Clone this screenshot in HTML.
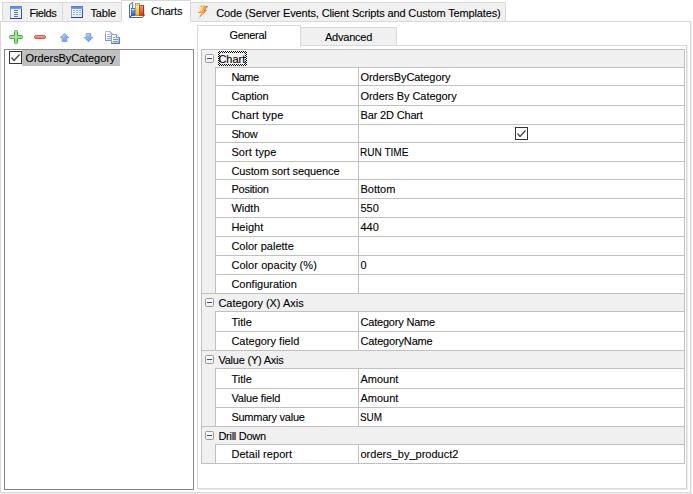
<!DOCTYPE html>
<html><head><meta charset="utf-8">
<style>
*{box-sizing:border-box;margin:0;padding:0}
html,body{width:693px;height:494px;overflow:hidden;background:#fff}
body{font-family:"Liberation Sans",sans-serif;font-size:11px;line-height:13px;color:#000;position:relative;-webkit-text-stroke:0.1px #000}
.abs{position:absolute}
.tab{position:absolute;background:#f0f0f0;border:1px solid #d9d9d9;border-bottom:none;white-space:nowrap}
.tab.sel{background:#fff}
.tab span{position:absolute;white-space:nowrap}
.page{position:absolute;left:0px;top:21px;width:691px;height:472px;border:1px solid #d9d9d9;background:#fff;box-shadow:1px 1px 0 #ececec}
.list{position:absolute;left:4px;top:49px;width:190px;height:441px;border:1px solid #868686;background:#fff}
.ipage{position:absolute;left:197px;top:45px;width:490px;height:444px;border:1px solid #d9d9d9;background:#fff;box-shadow:1px 1px 0 #ececec}
.grid{position:absolute;left:201px;top:49px;width:484px;height:415px;background:#fff;border:1px solid #c0c0c0}
.row{position:absolute;left:0;width:482px}
.ln{position:absolute;left:13px;right:0;bottom:0;height:1px;background:#c0c0c0}
.ln.f{left:0}
.hdr{background:#f0f0f0}
.gut{position:absolute;left:0;top:0;bottom:0;width:14px;background:#f0f0f0;border-right:1px solid #c0c0c0}
.lab{position:absolute;left:29.4px;white-space:nowrap}
.val{position:absolute;left:156px;top:0;bottom:0;width:326px;border-left:1px solid #c0c0c0;white-space:nowrap}
.val span{position:absolute;left:1.5px}
.ht{position:absolute;left:16px;height:15px;padding:2px 2px 0 0.4px;white-space:nowrap}
.focr{position:absolute;left:16px;width:29px;height:15px;border:2px solid transparent;background:linear-gradient(#f0f0f0,#f0f0f0) padding-box,repeating-conic-gradient(#000 0% 25%,#fff 0% 50%) 0 0/2px 2px border-box}
.pm{position:absolute;left:3px;width:9px;height:9px;border:1px solid #999;border-radius:1.5px;background:linear-gradient(#fff,#eee)}
.pm:after{content:"";position:absolute;left:1px;top:3px;width:5px;height:1px;background:#3a4a8a}
.cb{position:absolute;left:156px;width:13px;height:13px;border:1px solid #333;background:#fff}
.cb svg{position:absolute;left:-1px;top:-1px}
</style></head><body>
<!-- top tabs -->
<div class="tab" style="left:2px;top:2px;width:61px;height:20px"><span style="left:26.5px;top:4px;letter-spacing:-0.4px">Fields</span></div>
<div class="tab" style="left:62px;top:2px;width:62px;height:20px"><span style="left:27.4px;top:4px;letter-spacing:-0.15px">Table</span></div>
<div class="tab" style="left:189px;top:2px;width:317px;height:20px"><span style="left:26.3px;top:4px;letter-spacing:-0.135px">Code (Server Events, Client Scripts and Custom Templates)</span></div>
<div class="page"></div>
<div class="tab sel" style="left:121px;top:0px;width:70px;height:22px"><span style="left:29px;top:4px;letter-spacing:-0.2px">Charts</span></div>


<!-- Fields icon -->
<svg class="abs" style="left:10px;top:6px" width="12" height="13" viewBox="0 0 12 13">
<defs><linearGradient id="gF" x1="0" y1="0" x2="1" y2="1"><stop offset="0" stop-color="#fff"/><stop offset="1" stop-color="#d8e2f8"/></linearGradient>
<linearGradient id="gB" x1="0" y1="0" x2="0" y2="1"><stop offset="0" stop-color="#4a7ae8"/><stop offset="1" stop-color="#7a9ff0"/></linearGradient></defs>
<rect x="0.5" y="0.5" width="11" height="12" fill="url(#gF)" stroke="#86a2dc"/>
<rect x="0" y="0" width="12" height="3" fill="url(#gB)"/>
<rect x="11" y="3" width="1" height="10" fill="#3d5a8a"/><rect x="0" y="12" width="12" height="1" fill="#2f4a78"/>
<rect x="4" y="4" width="4" height="1" fill="#777"/><rect x="4" y="6" width="4" height="1" fill="#777"/><rect x="4" y="8" width="4" height="1" fill="#777"/><rect x="4" y="10" width="4" height="1" fill="#777"/>
</svg>
<!-- Table icon -->
<svg class="abs" style="left:71px;top:6px" width="12" height="12" viewBox="0 0 12 12">
<rect x="0.5" y="0.5" width="11" height="11" fill="url(#gF)" stroke="#86a2dc"/>
<rect x="0" y="0" width="12" height="3" fill="url(#gB)"/>
<rect x="11" y="3" width="1" height="9" fill="#3d5a8a"/><rect x="0" y="11" width="12" height="1" fill="#2f4a78"/>
<g fill="#9fb0d4"><rect x="2" y="4" width="2" height="1"/><rect x="5" y="4" width="2" height="1"/><rect x="8" y="4" width="2" height="1"/>
<rect x="2" y="6" width="2" height="1"/><rect x="5" y="6" width="2" height="1"/><rect x="8" y="6" width="2" height="1"/>
<rect x="2" y="8" width="2" height="1"/><rect x="5" y="8" width="2" height="1"/><rect x="8" y="8" width="2" height="1"/></g>
</svg>
<!-- Charts icon -->
<svg class="abs" style="left:129px;top:2px" width="16" height="16" viewBox="0 0 16 16">
<defs><linearGradient id="cB" x1="0" y1="0" x2="0" y2="1"><stop offset="0" stop-color="#7fb0ff"/><stop offset="1" stop-color="#2a58d0"/></linearGradient>
<linearGradient id="cY" x1="0" y1="0" x2="0" y2="1"><stop offset="0" stop-color="#fff8b0"/><stop offset="1" stop-color="#f2b800"/></linearGradient>
<linearGradient id="cR" x1="0" y1="0" x2="0" y2="1"><stop offset="0" stop-color="#ff9a80"/><stop offset="1" stop-color="#d83a10"/></linearGradient></defs>
<path d="M0.5 2.5 L3.7 0.4 L3.7 12 L0.5 15.2 Z" fill="#eef3fc" stroke="#3c5f95" stroke-width="0.9"/>
<path d="M0.5 15.5 L13.5 15.5 L15.6 12.8 L3.7 12.8 Z" fill="#f8faff" stroke="#2c4f88" stroke-width="0.9"/>
<rect x="2.3" y="6.6" width="3.6" height="7" fill="url(#cB)" stroke="#2848b0" stroke-width="0.6"/>
<rect x="2.6" y="7.2" width="3" height="0.9" fill="#dfeaff"/>
<rect x="6.3" y="1.3" width="4.2" height="12.3" fill="url(#cY)" stroke="#9a8630" stroke-width="0.7"/>
<rect x="6.6" y="2.6" width="3.6" height="0.7" fill="#9a8630" opacity="0.6"/>
<rect x="10.7" y="3.4" width="4.1" height="10.2" fill="url(#cR)" stroke="#a03a18" stroke-width="0.7"/>
<rect x="13.9" y="3.4" width="1" height="10.2" fill="#8a2c10" opacity="0.7"/>
</svg>
<!-- Lightning icon -->
<svg class="abs" style="left:197px;top:5px" width="12" height="14" viewBox="0 0 12 14">
<defs><linearGradient id="lG" x1="0" y1="0" x2="1" y2="0.25"><stop offset="0" stop-color="#ffe45a"/><stop offset="0.45" stop-color="#ffb845"/><stop offset="0.8" stop-color="#ff7a78"/><stop offset="1" stop-color="#f05070"/></linearGradient></defs>
<path d="M3 1 L10.9 1 L7.2 5.6 L9.4 5.6 L1.8 12.9 L4.3 7.9 L1 7.9 Z" fill="url(#lG)"/>
<path d="M3.6 1.9 L2.3 6.6" stroke="#fffbe0" stroke-width="1" opacity="0.85" fill="none"/>
<path d="M5.6 1.8 L4.6 5.2" stroke="#fff6c8" stroke-width="0.8" opacity="0.7" fill="none"/>
<path d="M10.9 1 L7.2 5.6 L9.4 5.6 L1.8 12.9" fill="none" stroke="#3a2430" stroke-width="0.8" stroke-dasharray="1 1" opacity="0.75"/>
<path d="M1 7.6 L4 7.6" stroke="#8a7a20" stroke-width="0.8" opacity="0.7"/>
<path d="M3.2 0.9 L10 0.9" stroke="#b8c850" stroke-width="0.7" opacity="0.8"/>
</svg>
<!-- Plus -->
<svg class="abs" style="left:9px;top:30px" width="14" height="14" viewBox="0 0 14 14">
<defs><linearGradient id="pG" x1="0" y1="0" x2="1" y2="1"><stop offset="0" stop-color="#c4f4b4"/><stop offset="1" stop-color="#7fd870"/></linearGradient></defs>
<path d="M6.5 0.5 H7.5 Q8.5 0.5 8.5 1.5 V5.5 H12.5 Q13.5 5.5 13.5 6.5 V7.5 Q13.5 8.5 12.5 8.5 H8.5 V12.5 Q8.5 13.5 7.5 13.5 H6.5 Q5.5 13.5 5.5 12.5 V8.5 H1.5 Q0.5 8.5 0.5 7.5 V6.5 Q0.5 5.5 1.5 5.5 H5.5 V1.5 Q5.5 0.5 6.5 0.5 Z" fill="url(#pG)" stroke="#45a545" stroke-width="1"/>
</svg>
<!-- Minus -->
<svg class="abs" style="left:34px;top:35px" width="12" height="4" viewBox="0 0 12 4">
<defs><linearGradient id="mG" x1="0" y1="0" x2="0" y2="1"><stop offset="0" stop-color="#fbb8a4"/><stop offset="0.5" stop-color="#f49078"/><stop offset="1" stop-color="#e8684e"/></linearGradient></defs>
<rect x="0.5" y="0.5" width="11" height="3" rx="1.5" fill="url(#mG)" stroke="#d9584a"/>
</svg>
<!-- Up arrow -->
<svg class="abs" style="left:60px;top:33px" width="9" height="9" viewBox="0 0 9 9">
<defs><linearGradient id="aG" x1="0.2" y1="0" x2="0.8" y2="1"><stop offset="0" stop-color="#c4d8fa"/><stop offset="0.5" stop-color="#8fb2f2"/><stop offset="1" stop-color="#6a96e8"/></linearGradient></defs>
<path d="M4.5 0.3 L8.8 4.6 L6.8 4.6 L6.8 8.8 L2.2 8.8 L2.2 4.6 L0.2 4.6 Z" fill="url(#aG)" stroke="#5f8ce0" stroke-width="0.7"/>
</svg>
<!-- Down arrow -->
<svg class="abs" style="left:84px;top:33px" width="9" height="9" viewBox="0 0 9 9">
<path d="M4.5 8.7 L8.8 4.4 L6.8 4.4 L6.8 0.2 L2.2 0.2 L2.2 4.4 L0.2 4.4 Z" fill="url(#aG)" stroke="#5f8ce0" stroke-width="0.7"/>
</svg>
<!-- Copy -->
<svg class="abs" style="left:105px;top:31px" width="15" height="13" viewBox="0 0 15 13">
<defs><linearGradient id="cpG" x1="0" y1="0" x2="1" y2="1"><stop offset="0.3" stop-color="#fff"/><stop offset="1" stop-color="#d4def4"/></linearGradient></defs>
<path d="M0.5 0.5 H5.2 L7.5 2.8 V9.5 H0.5 Z" fill="url(#cpG)" stroke="#a9bbe2" stroke-width="1"/>
<path d="M0.5 3 V9.5 H6.5" fill="none" stroke="#8595b4" stroke-width="1"/>
<path d="M5.2 0.5 V2.8 H7.5" fill="none" stroke="#7f93b8" stroke-width="0.8"/>
<rect x="2" y="3" width="2.4" height="1" fill="#a6c2ee"/><rect x="2" y="5" width="4" height="1" fill="#8fb0e8"/><rect x="2" y="7" width="4" height="1" fill="#8fb0e8"/>
<path d="M6.5 3.5 H11.3 L14.5 6.7 V12.5 H6.5 Z" fill="url(#cpG)" stroke="#86a0de" stroke-width="1"/>
<path d="M6.3 12.3 H14.3 V6.8" fill="none" stroke="#5676c8" stroke-width="1.15"/>
<path d="M11.3 3.5 V6.7 H14.5" fill="#fff" stroke="#5a7acc" stroke-width="0.9"/>
<rect x="8" y="6" width="2.4" height="1" fill="#86a6e6"/><rect x="8" y="8" width="5" height="1" fill="#6f92dc"/><rect x="8" y="10" width="5" height="1" fill="#6f92dc"/>
</svg>

<div class="list"></div>
<div class="abs" style="left:22px;top:50px;width:98px;height:16px;background:#c0c0c0"></div>
<div class="abs" style="left:25.5px;top:52px;white-space:nowrap;letter-spacing:-0.09px">OrdersByCategory</div>
<div class="abs" style="left:9px;top:51px;width:13px;height:13px;border:1px solid #333;background:#fff"><svg class="abs" style="left:-1px;top:-1px" width="13" height="13" viewBox="0 0 13 13"><path d="M2.5 6.5 L5 9.5 L10.5 3.5" fill="none" stroke="#444" stroke-width="1.3"/></svg></div>

<!-- inner tabs -->
<div class="tab" style="left:299px;top:27px;width:98px;height:19px"><span style="left:25px;top:3px;letter-spacing:-0.22px">Advanced</span></div>
<div class="ipage"></div>
<div class="tab sel" style="left:197px;top:25px;width:104px;height:22px"><span style="left:31.6px;top:3px;letter-spacing:-0.35px">General</span></div>

<div class="grid">
<div class="row hdr" style="top:0px;height:18px"><div class="pm" style="top:4px"></div><div class="focr" style="top:1px"></div><div class="ht" style="top:1px">Chart</div><div class="ln"></div></div>
<div class="row" style="top:18px;height:18px"><div class="gut"></div><div class="lab" style="top:3px;letter-spacing:-0.55px">Name</div><div class="val"><span style="top:3px;letter-spacing:-0.07px">OrdersByCategory</span></div><div class="ln"></div></div>
<div class="row" style="top:36px;height:20px"><div class="gut"></div><div class="lab" style="top:4px;letter-spacing:-0.1px">Caption</div><div class="val"><span style="top:4px;letter-spacing:-0.06px">Orders By Category</span></div><div class="ln"></div></div>
<div class="row" style="top:56px;height:19px"><div class="gut"></div><div class="lab" style="top:3px;letter-spacing:0.13px">Chart type</div><div class="val"><span style="top:3px;letter-spacing:-0.16px">Bar 2D Chart</span></div><div class="ln"></div></div>
<div class="row" style="top:75px;height:18px"><div class="gut"></div><div class="lab" style="top:3px;letter-spacing:-0.4px">Show</div><div class="val"><div class="cb" style="top:2px"><svg width="13" height="13" viewBox="0 0 13 13"><path d="M2.5 6.5 L5 9.5 L10.5 3.5" fill="none" stroke="#444" stroke-width="1.3"/></svg></div></div><div class="ln"></div></div>
<div class="row" style="top:93px;height:19px"><div class="gut"></div><div class="lab" style="top:3px;letter-spacing:0.12px">Sort type</div><div class="val"><span style="top:3px;left:1px;transform:scaleX(0.915);transform-origin:0 0">RUN TIME</span></div><div class="ln"></div></div>
<div class="row" style="top:112px;height:18px"><div class="gut"></div><div class="lab" style="top:3px;letter-spacing:-0.1px">Custom sort sequence</div><div class="val"></div><div class="ln"></div></div>
<div class="row" style="top:130px;height:19px"><div class="gut"></div><div class="lab" style="top:3px;letter-spacing:-0.23px">Position</div><div class="val"><span style="top:3px">Bottom</span></div><div class="ln"></div></div>
<div class="row" style="top:149px;height:19px"><div class="gut"></div><div class="lab" style="top:3px">Width</div><div class="val"><span style="top:3px">550</span></div><div class="ln"></div></div>
<div class="row" style="top:168px;height:19px"><div class="gut"></div><div class="lab" style="top:3px">Height</div><div class="val"><span style="top:3px">440</span></div><div class="ln"></div></div>
<div class="row" style="top:187px;height:19px"><div class="gut"></div><div class="lab" style="top:3px">Color palette</div><div class="val"></div><div class="ln"></div></div>
<div class="row" style="top:206px;height:19px"><div class="gut"></div><div class="lab" style="top:3px;letter-spacing:0.07px">Color opacity (%)</div><div class="val"><span style="top:3px">0</span></div><div class="ln"></div></div>
<div class="row" style="top:225px;height:19px"><div class="gut"></div><div class="lab" style="top:3px">Configuration</div><div class="val"></div><div class="ln f"></div></div>
<div class="row hdr" style="top:244px;height:18px"><div class="pm" style="top:4px"></div><div class="ht" style="top:1px;letter-spacing:-0.02px">Category (X) Axis</div><div class="ln"></div></div>
<div class="row" style="top:262px;height:20px"><div class="gut"></div><div class="lab" style="top:4px">Title</div><div class="val"><span style="top:4px;letter-spacing:-0.2px">Category Name</span></div><div class="ln"></div></div>
<div class="row" style="top:282px;height:19px"><div class="gut"></div><div class="lab" style="top:3px">Category field</div><div class="val"><span style="top:3px;letter-spacing:-0.16px">CategoryName</span></div><div class="ln f"></div></div>
<div class="row hdr" style="top:301px;height:18px"><div class="pm" style="top:4px"></div><div class="ht" style="top:1px;letter-spacing:-0.22px">Value (Y) Axis</div><div class="ln"></div></div>
<div class="row" style="top:319px;height:20px"><div class="gut"></div><div class="lab" style="top:4px">Title</div><div class="val"><span style="top:4px">Amount</span></div><div class="ln"></div></div>
<div class="row" style="top:339px;height:19px"><div class="gut"></div><div class="lab" style="top:3px;letter-spacing:-0.15px">Value field</div><div class="val"><span style="top:3px">Amount</span></div><div class="ln"></div></div>
<div class="row" style="top:358px;height:19px"><div class="gut"></div><div class="lab" style="top:3px;letter-spacing:-0.24px">Summary value</div><div class="val"><span style="top:3px;left:1px;transform:scaleX(0.9);transform-origin:0 0">SUM</span></div><div class="ln f"></div></div>
<div class="row hdr" style="top:377px;height:18px"><div class="pm" style="top:4px"></div><div class="ht" style="top:1px;letter-spacing:-0.27px">Drill Down</div><div class="ln"></div></div>
<div class="row" style="top:395px;height:19px"><div class="gut"></div><div class="lab" style="top:3px;letter-spacing:0.07px">Detail report</div><div class="val"><span style="top:3px">orders_by_product2</span></div><div class="ln f"></div></div>
</div>
</body></html>
